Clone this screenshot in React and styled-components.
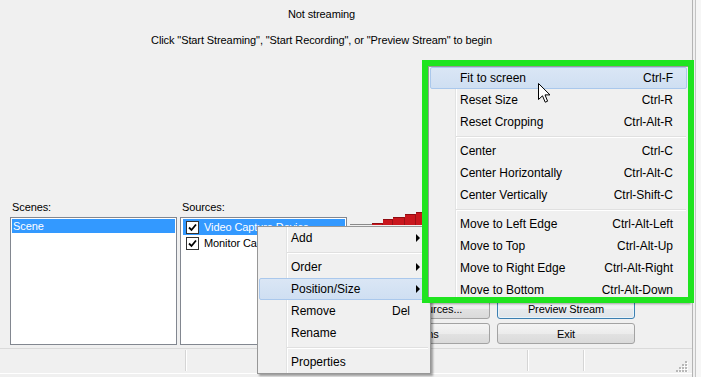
import React from "react";
import styled, { createGlobalStyle } from "styled-components";

const GlobalStyle = createGlobalStyle`
  html, body { margin: 0; padding: 0; background: #f0f0f0; }
  body { font-family: "Liberation Sans", Arial, sans-serif; overflow: hidden; }
  * { box-sizing: border-box; }
`;

const Screen = styled.div`
  position: relative;
  display: flex;
  width: 701px;
  height: 377px;
  background: #f0f0f0;
  overflow: hidden;
`;

const Window = styled.div`
  display: flex;
  flex-direction: column;
  width: 693px;
  border-right: 1px solid #b4b4b4;
`;

const Frame = styled.div`
  flex: 1;
  margin-left: 2px;
  border-left: 1px solid #c4c4c4;
  background: #f6f6f6;
`;

const Preview = styled.div`
  flex: 1;
  width: 643px;
  display: flex;
  flex-direction: column;
  align-items: center;
  padding-top: 8px;
  gap: 13px;
`;

const DialogText = styled.div`
  font-size: 11px;
  line-height: 13px;
  letter-spacing: -0.1px;
  color: #000;
  white-space: nowrap;
`;

const Panel = styled.div`
  display: grid;
  grid-template-columns: 167px 167px 1fr;
  column-gap: 3px;
  height: 147px;
  padding-left: 10px;
`;

const Column = styled.div`
  display: flex;
  flex-direction: column;
`;

const Label = styled(DialogText)`
  margin: 0 0 3px 2px;
`;

const List = styled.div`
  height: 128px;
  border: 1px solid #828790;
  background: #fff;
  padding: 1px;
`;

const SceneItem = styled.div`
  height: 14px;
  line-height: 14px;
  padding-left: 1px;
  font-size: 11px;
  letter-spacing: -0.1px;
  color: ${p => (p.$selected ? "#fff" : "#000")};
  background: ${p => (p.$selected ? "#3399ff" : "transparent")};
`;

const SourceItem = styled.div`
  display: flex;
  align-items: center;
  gap: 5px;
  height: 16px;
  margin-left: 1px;
  padding-left: 3px;
  font-size: 11px;
  letter-spacing: -0.1px;
  white-space: nowrap;
  overflow: hidden;
  color: ${p => (p.$selected ? "#fff" : "#000")};
  background: ${p => (p.$selected ? "#3399ff" : "transparent")};
`;

const Check = styled.span`
  display: flex;
  align-items: center;
  justify-content: center;
  width: 13px;
  height: 13px;
  flex: none;
  border: 1px solid #333;
  background: #fff;
`;

const Controls = styled.div`
  display: flex;
  flex-direction: column;
  padding-bottom: 4px;
`;

const Meter = styled.svg`
  display: block;
  margin-top: 11px;
`;

const ButtonGrid = styled.div`
  margin-top: auto;
  display: grid;
  grid-template-columns: 138px 138px;
  grid-auto-rows: 21px;
  column-gap: 7px;
  row-gap: 4px;
  padding-left: 2px;
`;

const Button = styled.button`
  height: 21px;
  padding: 0;
  border: 1px solid ${p => (p.$focus ? "#3c7fb1" : "#a3a3a3")};
  border-radius: 3px;
  background: ${p =>
    p.$focus
      ? "linear-gradient(#f6f9fc 0%, #eef1f4 50%, #e6eaee 51%, #e0e4e8 100%)"
      : "linear-gradient(#f4f4f4 0%, #ececec 50%, #e2e2e2 51%, #dadada 100%)"};
  box-shadow: ${p => (p.$focus ? "inset 0 0 0 1px #e8f4fb" : "none")};
  font-family: "Liberation Sans", Arial, sans-serif;
  font-size: 11px;
  letter-spacing: -0.1px;
  color: #000;
`;

const StatusBar = styled.div`
  display: flex;
  height: 25px;
  border-top: 1px solid #dadada;
`;

const StatusCell = styled.div`
  width: ${p => p.$w}px;
  margin: 1px 0 2px;
  border-right: 1px solid #d5d5d5;
  box-shadow: 1px 0 0 #fff;
`;

const GripCell = styled.div`
  flex: 1;
  display: flex;
  justify-content: flex-end;
  align-items: flex-end;
  padding: 0 4px 1px 0;
`;

const BottomEdge = styled.div`
  height: 4px;
  border-top: 1px solid #fff;
`;

const Menu = styled.div`
  position: absolute;
  left: ${p => p.$x}px;
  top: ${p => p.$y}px;
  width: ${p => p.$w}px;
  z-index: ${p => p.$z};
  border: 1px solid #979797;
  background: #f0f0f0;
  box-shadow: 2px 2px 2px rgba(0, 0, 0, 0.35);
  font-family: "Liberation Sans", Arial, sans-serif;
  font-size: 12px;
  color: #000;

  &::before {
    content: "";
    position: absolute;
    top: 0;
    bottom: 0;
    left: ${p => p.$gutter}px;
    width: 1px;
    background: #e2e3e3;
    box-shadow: 1px 0 0 #fff;
  }
`;

const MenuItem = styled.div`
  position: relative;
  display: flex;
  align-items: center;
  height: 22px;
  margin: 0 1px;
  padding: 0 ${p => p.$pr}px 0 ${p => p.$pl}px;
  border: 1px solid ${p => (p.$hot ? "#aac8ec" : "transparent")};
  border-radius: 2px;
  background: ${p =>
    p.$hot ? "linear-gradient(#dae6f5, #cfdff2)" : "transparent"};
  white-space: nowrap;
  z-index: 1;
`;

const ItemLabel = styled.span`
  flex: 1;
`;

const Shortcut = styled.span`
  margin-right: ${p => p.$mr || 0}px;
`;

const Arrow = styled.span`
  width: 0;
  height: 0;
  border-top: 4px solid transparent;
  border-bottom: 4px solid transparent;
  border-left: 4px solid #000;
`;

const Separator = styled.div`
  position: relative;
  height: 7px;

  &::after {
    content: "";
    position: absolute;
    top: 3px;
    left: ${p => p.$left}px;
    right: 2px;
    height: 1px;
    background: #e0e0e0;
    box-shadow: 0 1px 0 #fff;
  }
`;

const Highlight = styled.div`
  position: absolute;
  left: 422px;
  top: 60px;
  width: 272px;
  height: 243px;
  border: 6px solid #1fe41f;
  z-index: 3;
  pointer-events: none;
`;

const Cursor = styled.svg`
  position: absolute;
  left: 538px;
  top: 83px;
  z-index: 4;
`;

const sourceMenu = [
  { label: "Add", sub: true },
  { sep: true },
  { label: "Order", sub: true },
  { label: "Position/Size", sub: true, hot: true },
  { label: "Remove", key: "Del" },
  { label: "Rename" },
  { sep: true },
  { label: "Properties" },
];

const positionMenu = [
  { label: "Fit to screen", key: "Ctrl-F", hot: true },
  { label: "Reset Size", key: "Ctrl-R" },
  { label: "Reset Cropping", key: "Ctrl-Alt-R" },
  { sep: true },
  { label: "Center", key: "Ctrl-C" },
  { label: "Center Horizontally", key: "Ctrl-Alt-C" },
  { label: "Center Vertically", key: "Ctrl-Shift-C" },
  { sep: true },
  { label: "Move to Left Edge", key: "Ctrl-Alt-Left" },
  { label: "Move to Top", key: "Ctrl-Alt-Up" },
  { label: "Move to Right Edge", key: "Ctrl-Alt-Right" },
  { label: "Move to Bottom", key: "Ctrl-Alt-Down" },
];

const buttons = [
  ["Settings...", "Start Streaming"],
  ["Edit Scene", "Start Recording"],
  ["Global Sources...", "Preview Stream"],
  ["Plugins", "Exit"],
];

const bars = [
  [22, 33, 2],
  [33, 43, 6],
  [43, 55, 8],
  [55, 66, 11],
  [66, 78, 13],
];

function CheckMark() {
  return (
    <svg width="9" height="9" viewBox="0 0 9 9">
      <path d="M1 4.5 L3.5 7 L8 1.5" fill="none" stroke="#000" strokeWidth="1.8" />
    </svg>
  );
}

function MenuList({ items, gutter, pl, pr, delMargin }) {
  return items.map((it, i) =>
    it.sep ? (
      <Separator key={i} $left={gutter + 1} />
    ) : (
      <MenuItem key={i} $hot={it.hot} $pl={pl} $pr={pr}>
        <ItemLabel>{it.label}</ItemLabel>
        {it.key && <Shortcut $mr={delMargin}>{it.key}</Shortcut>}
        {it.sub && <Arrow />}
      </MenuItem>
    )
  );
}

export default function App() {
  return (
    <Screen>
      <GlobalStyle />
      <Window>
        <Preview>
          <DialogText>Not streaming</DialogText>
          <DialogText>
            Click "Start Streaming", "Start Recording", or "Preview Stream" to begin
          </DialogText>
        </Preview>

        <Panel>
          <Column>
            <Label>Scenes:</Label>
            <List>
              <SceneItem $selected>Scene</SceneItem>
            </List>
          </Column>
          <Column>
            <Label>Sources:</Label>
            <List>
              <SourceItem $selected>
                <Check><CheckMark /></Check>
                Video Capture Device
              </SourceItem>
              <SourceItem>
                <Check><CheckMark /></Check>
                Monitor Capture
              </SourceItem>
            </List>
          </Column>
          <Controls>
            <Meter width="285" height="14" viewBox="0 0 285 14">
              <rect x="0" y="12" width="22" height="1" fill="#8a8a8a" />
              {bars.map(([a, b, h], i) => (
                <g key={i}>
                  <rect x={a} y={13 - h} width={b - a} height={h} fill="#c9161d" />
                  <rect x={a} y={13 - h} width={b - a} height="1" fill="#8f0c11" />
                  <rect x={b - 1} y={13 - h} width="1" height={h} fill="#9c1015" />
                </g>
              ))}
            </Meter>
            <ButtonGrid>
              {buttons.flat().map(b => (
                <Button key={b} $focus={b === "Preview Stream"}>{b}</Button>
              ))}
            </ButtonGrid>
          </Controls>
        </Panel>

        <StatusBar>
          <StatusCell $w={186} />
          <StatusCell $w={342} />
          <StatusCell $w={56} />
          <GripCell>
            <svg width="12" height="12" viewBox="0 0 12 12">
              {[[9, 1], [6, 4], [9, 4], [3, 7], [6, 7], [9, 7], [0, 10], [3, 10], [6, 10], [9, 10]].map(([x, y], i) => (
                <g key={i}>
                  <rect x={x + 1} y={y + 1} width="2" height="2" fill="#fff" />
                  <rect x={x} y={y} width="2" height="2" fill="#b8b8b8" />
                </g>
              ))}
            </svg>
          </GripCell>
        </StatusBar>
        <BottomEdge />
      </Window>
      <Frame />

      <Menu $x={257} $y={226} $w={174} $z={2} $gutter={28}>
        <MenuList items={sourceMenu} gutter={28} pl={31} pr={8} delMargin={10} />
      </Menu>

      <Menu $x={428} $y={66} $w={261} $z={2} $gutter={26}>
        <MenuList items={positionMenu} gutter={26} pl={29} pr={13} />
      </Menu>

      <Highlight />

      <Cursor width="13" height="21" viewBox="0 0 13 21">
        <path
          d="M0.5 0.5 L0.5 16.5 L4.5 12.8 L7.2 19.2 L9.6 18.2 L7 11.9 L12 11.9 Z"
          fill="#fff"
          stroke="#000"
          strokeWidth="1"
          strokeLinejoin="miter"
        />
      </Cursor>
    </Screen>
  );
}
